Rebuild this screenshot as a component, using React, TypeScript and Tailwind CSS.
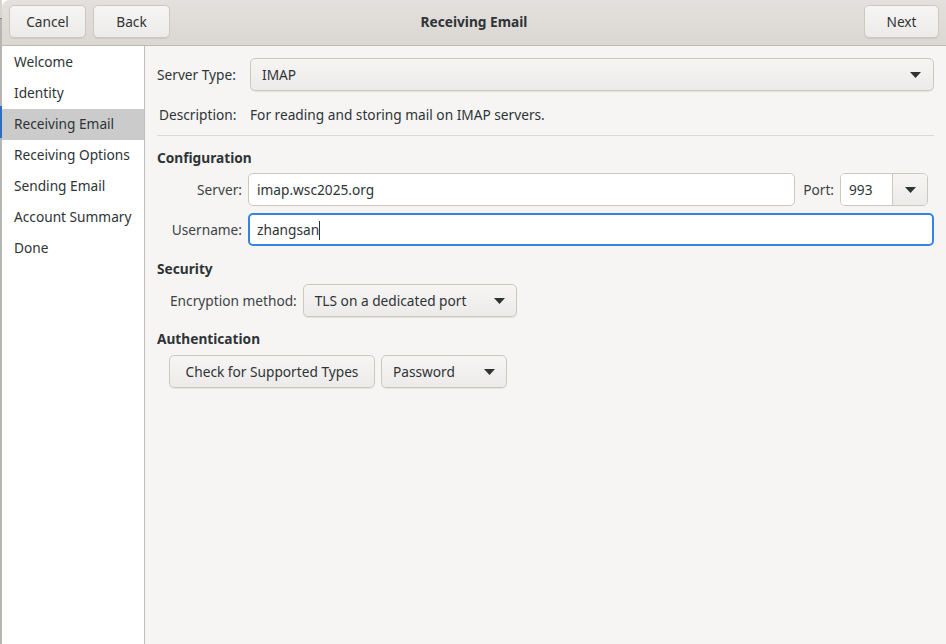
import React from 'react';

const font = { fontFamily: '"Noto Sans", "DejaVu Sans", sans-serif' };

function Arrow() {
  return (
    <svg width="11" height="6" viewBox="0 0 11 6" className="shrink-0">
      <path d="M0 0 H11 L5.5 6 Z" fill="#2e3436" />
    </svg>
  );
}

function Button({ children, className = '' }: { children: React.ReactNode; className?: string }) {
  return (
    <div
      className={`flex items-center justify-center h-[33px] rounded-[5px] border border-[#cdc7c2] bg-gradient-to-b from-[#f6f5f4] to-[#edebe9] text-[#2e3436] shadow-[0_1px_0_rgba(0,0,0,0.07)] ${className}`}
    >
      {children}
    </div>
  );
}

function Combo({ value, className = '' }: { value: string; className?: string }) {
  return (
    <Button className={`justify-between! pl-[11px] pr-[11px] ${className}`}>
      <span className="pt-[2px]">{value}</span>
      <Arrow />
    </Button>
  );
}

const steps = [
  'Welcome',
  'Identity',
  'Receiving Email',
  'Receiving Options',
  'Sending Email',
  'Account Summary',
  'Done',
];

export default function App() {
  return (
    <div className="flex w-[946px] h-[644px] overflow-hidden text-[13.7px] text-[#2e3436]" style={font}>
      {/* window behind, peeking at the left edge */}
      <div className="flex flex-col w-[2px] shrink-0 bg-[#b7b5b2]">
        <div className="h-[18px] bg-[#d6d3cf]" />
        <div className="h-[1px] bg-[#8c8a87]" />
        <div className="h-[87px]" />
        <div className="h-[32px] bg-[#2a6ec2]" />
        <div className="flex-1" />
      </div>

      <div className="flex flex-col flex-1 rounded-tl-[8px] overflow-hidden bg-[#f6f5f4]">
        {/* Header bar */}
        <div className="grid grid-cols-[1fr_auto_1fr] items-start pt-[5px] h-[46px] px-[7px] border-b border-[#bfb8b1] bg-gradient-to-b from-[#e3e0dd] to-[#dbd7d3]">
          <div className="flex gap-[7px]">
            <Button className="w-[77px]"><span className="pt-[2px]">Cancel</span></Button>
            <Button className="w-[77px]"><span className="pt-[2px]">Back</span></Button>
          </div>
          <div className="h-[33px] flex items-center justify-center font-bold pt-[2px]">Receiving Email</div>
          <div className="flex justify-end">
            <Button className="w-[75px]"><span className="pt-[2px]">Next</span></Button>
          </div>
        </div>

        <div className="flex flex-1">
          {/* Sidebar */}
          <div className="w-[143px] shrink-0 bg-white border-r border-[#c0bdb9] flex flex-col pt-[1px]">
            {steps.map((s) => (
              <div
                key={s}
                className={`h-[31px] flex items-center pl-[12px] ${s === 'Receiving Email' ? 'bg-[#cbcbcb]' : ''}`}
              >
                {s}
              </div>
            ))}
          </div>

          {/* Content */}
          <div className="flex-1 flex flex-col pl-[12px] pr-[12px] pt-[12px]">
            <div className="flex items-center gap-[12px]">
              <span className="w-[81px] pt-[2px]">Server Type:</span>
              <Combo value="IMAP" className="flex-1 pr-[12px]" />
            </div>

            <div className="flex items-center h-[22px] mt-[12px] pl-[2px] pt-[2px]">
              <span className="w-[91px]">Description:</span>
              <span>For reading and storing mail on IMAP servers.</span>
            </div>

            <div className="h-[1px] bg-[#dcd8d4] mt-[10px]" />

            <div className="font-bold mt-[11px] leading-[22px]">Configuration</div>

            <div className="flex items-center mt-[4px] pr-[6px]">
              <span className="w-[85px] text-right text-[#3d4345] pt-[2px]">Server:</span>
              <div className="flex-1 ml-[6px] h-[33px] flex items-center px-[8px] pt-[2px] bg-white border border-[#cdc7c2] rounded-[5px]">
                imap.wsc2025.org
              </div>
              <span className="ml-[8px] text-[#3d4345] pt-[2px]">Port:</span>
              <div className="ml-[6px] flex h-[33px] w-[88px] border border-[#cdc7c2] rounded-[5px] overflow-hidden">
                <div className="flex-1 bg-white flex items-center pl-[8px] pt-[2px]">993</div>
                <div className="w-[35px] border-l border-[#cdc7c2] bg-gradient-to-b from-[#f6f5f4] to-[#edebe9] flex items-center justify-center">
                  <Arrow />
                </div>
              </div>
            </div>

            <div className="flex items-center mt-[7px]">
              <span className="w-[85px] text-right text-[#3d4345] pt-[2px]">Username:</span>
              <div className="flex-1 ml-[6px] h-[33px] flex items-center px-[7px] pt-[2px] bg-white border-2 border-[#3584e4] rounded-[5px]">
                zhangsan
                <span className="inline-block w-[1px] h-[19px] bg-[#2e3436]" />
              </div>
            </div>

            <div className="font-bold mt-[12px] leading-[22px]">Security</div>
            <div className="flex items-center mt-[4px] pl-[13px] gap-[6px]">
              <span className="text-[#3d4345] pt-[2px]">Encryption method:</span>
              <Combo value="TLS on a dedicated port" className="w-[214px]" />
            </div>

            <div className="font-bold mt-[11px] leading-[22px]">Authentication</div>
            <div className="flex items-center mt-[5px] pl-[12px] gap-[6px]">
              <Button className="w-[206px]"><span className="pt-[2px]">Check for Supported Types</span></Button>
              <Combo value="Password" className="w-[126px]" />
            </div>
          </div>
        </div>
      </div>
    </div>
  );
}
